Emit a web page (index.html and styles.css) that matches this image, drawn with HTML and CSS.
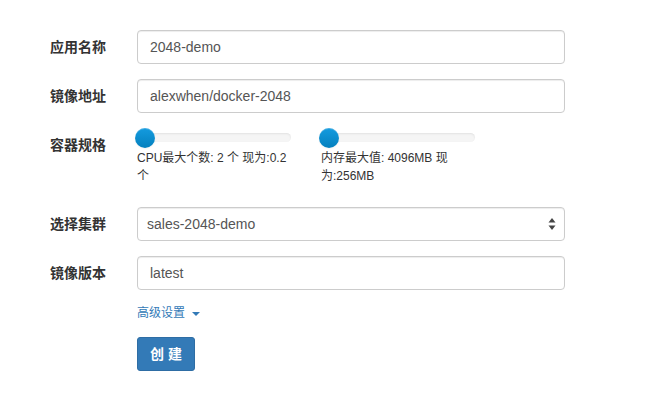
FILE: index.html
```html
<!DOCTYPE html>
<html lang="zh">
<head>
  <meta charset="UTF-8">
  <title>创建应用</title>
  <link rel="stylesheet" href="styles.css">
</head>
<body>
  <form class="app-form">
    <!-- 应用名称 -->
    <div class="form-group">
      <label class="control-label">应用名称</label>
      <input class="form-control" type="text" value="2048-demo">
    </div>

    <!-- 镜像地址 -->
    <div class="form-group">
      <label class="control-label">镜像地址</label>
      <input class="form-control" type="text" value="alexwhen/docker-2048">
    </div>

    <!-- 容器规格 -->
    <div class="form-group spec">
      <label class="control-label">容器规格</label>
      <div class="sliders">
        <div class="slider-box">
          <div class="slider">
            <div class="track"></div>
            <div class="handle"></div>
          </div>
          <p class="slider-text">CPU最大个数: 2 个 现为:0.2 个</p>
        </div>
        <div class="slider-box">
          <div class="slider">
            <div class="track"></div>
            <div class="handle"></div>
          </div>
          <p class="slider-text">内存最大值: 4096MB 现为:256MB</p>
        </div>
      </div>
    </div>

    <!-- 选择集群 -->
    <div class="form-group">
      <label class="control-label">选择集群</label>
      <div class="select-wrap">
        <select class="form-control">
          <option>sales-2048-demo</option>
        </select>
        <svg class="select-arrows" width="8" height="12" viewBox="0 0 8 12">
          <path d="M4 0 L7.5 4.5 L0.5 4.5 Z" fill="#444"/>
          <path d="M4 12 L7.5 7.5 L0.5 7.5 Z" fill="#444"/>
        </svg>
      </div>
    </div>

    <!-- 镜像版本 -->
    <div class="form-group">
      <label class="control-label">镜像版本</label>
      <input class="form-control" type="text" value="latest">
    </div>

    <div class="form-group">
      <span></span>
      <a class="advanced" href="#">高级设置 <span class="caret"></span></a>
    </div>

    <div class="form-group">
      <span></span>
      <div><button class="btn" type="button">创 建</button></div>
    </div>
  </form>
</body>
</html>
```

FILE: styles.css
```css
html, body{
  margin: 0;
  padding: 0;
  background: #fff;
}
body{
  font-family: "Liberation Sans", "Noto Sans CJK SC", sans-serif;
  font-size: 14px;
  line-height: 20px;
  color: #333;
}

/* 전체 폼 */
.app-form{
  padding: 30px 0 0 50px;
}

.form-group{
  display: grid;
  grid-template-columns: 87px 428px;
  margin-bottom: 15px;
}

.control-label{
  padding-top: 7px;
  font-weight: bold;
  color: #333;
}

.form-control{
  display: block;
  box-sizing: border-box;
  width: 100%;
  height: 34px;
  margin: 0;
  padding: 6px 12px;
  font: 14px/20px "Liberation Sans", "Noto Sans CJK SC", sans-serif;
  color: #555;
  background: #fff;
  border: 1px solid #ccc;
  border-radius: 4px;
  box-shadow: inset 0 1px 1px rgba(0,0,0,.075);
  outline: none;
}

/* 슬라이더 */
.spec{
  margin-bottom: 22px;
}
.sliders{
  display: flex;
  gap: 30px;
}
.slider-box{
  width: 154px;
}
.slider{
  position: relative;
  height: 20px;
}
.track{
  position: absolute;
  top: 5px;
  left: 0;
  right: 0;
  height: 9px;
  border-radius: 5px;
  background: #f5f5f5;
  box-shadow: inset 0 1px 2px rgba(0,0,0,.08);
}
.handle{
  position: absolute;
  top: 0;
  left: -2px;
  width: 20px;
  height: 20px;
  border-radius: 50%;
  background: linear-gradient(#149bdf, #0480be);
  box-shadow: inset 0 1px 0 rgba(255,255,255,.2), 0 1px 2px rgba(0,0,0,.05);
}
.slider-text{
  margin: 0;
  padding-top: 1px;
  font-size: 12px;
  line-height: 18px;
  color: #333;
}

/* 셀렉트 */
.select-wrap{
  position: relative;
}
.select-wrap select{
  padding-left: 9px;
  appearance: none;
  -webkit-appearance: none;
}
.select-arrows{
  position: absolute;
  top: 11px;
  right: 9px;
}

/* 고급설정 링크 */
.advanced{
  font-size: 12px;
  line-height: 17px;
  color: #337ab7;
  text-decoration: none;
}
.caret{
  display: inline-block;
  width: 0;
  height: 0;
  margin-left: 4px;
  vertical-align: middle;
  border-top: 4px solid #337ab7;
  border-left: 4px solid transparent;
  border-right: 4px solid transparent;
}

/* 버튼 */
.btn{
  display: inline-block;
  height: 34px;
  padding: 6px 12px;
  font: bold 14px/20px "Liberation Sans", "Noto Sans CJK SC", sans-serif;
  color: #fff;
  background: #337ab7;
  border: 1px solid #2e6da4;
  border-radius: 3px;
}
```
